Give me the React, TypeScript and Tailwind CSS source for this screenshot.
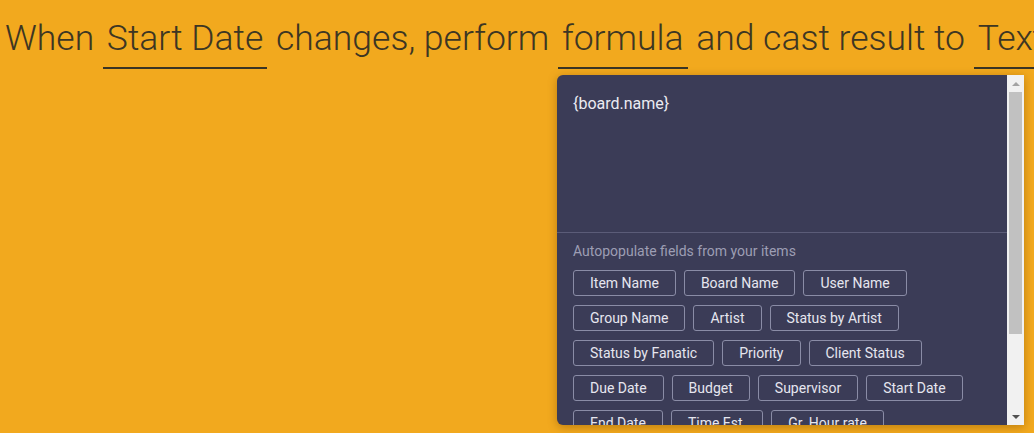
const chipRows = [
  ['Item Name', 'Board Name', 'User Name'],
  ['Group Name', 'Artist', 'Status by Artist'],
  ['Status by Fanatic', 'Priority', 'Client Status'],
  ['Due Date', 'Budget', 'Supervisor', 'Start Date'],
  ['End Date', 'Time Est.', 'Gr. Hour rate'],
]

function Pick({ label }: { label: string }) {
  return (
    <span className="inline-block border-b-2 border-[#3a3424] px-[4px] pb-[8px] leading-[42px]">
      {label}
    </span>
  )
}

export default function App() {
  return (
    <div
      className="h-[433px] w-full overflow-hidden bg-[#f2a91e] text-[#3d3623]"
      style={{ fontFamily: 'Roboto, "Liberation Sans", sans-serif' }}
    >
      {/* Sentence */}
      <div className="whitespace-nowrap pl-[5px] pt-[17px] text-[35.5px] font-light leading-[42px]">
        When <Pick label="Start Date" /> changes, perform <Pick label="formula" /> and cast result to{' '}
        <Pick label="Text" />
      </div>

      {/* Formula dropdown */}
      <div className="ml-[557px] mt-[6px] flex h-[350px] w-[467px] overflow-hidden rounded-l-[6px] bg-[#3b3c57] shadow-[0_2px_10px_rgba(120,70,0,0.45)]">
        <div className="flex min-w-0 flex-1 flex-col overflow-hidden">
          <div className="h-[158px] shrink-0 border-b border-[#5b5c78] px-4 pt-[17px] text-[16px] text-[#ebebf2]">
            {'{board.name}'}
          </div>
          <div className="px-4 pt-[9px]">
            <div className="text-[14px] leading-[18px] text-[#9d9eb4]">Autopopulate fields from your items</div>
            <div className="mt-[10px] flex flex-col gap-[9px]">
              {chipRows.map((row, i) => (
                <div key={i} className="flex gap-2">
                  {row.map((c) => (
                    <div
                      key={c}
                      className="flex h-[26px] items-center rounded-[3px] border border-[#8a8ca6] px-4 text-[14px] text-[#e6e6ef]"
                    >
                      {c}
                    </div>
                  ))}
                </div>
              ))}
            </div>
          </div>
        </div>

        {/* scrollbar */}
        <div className="flex w-[17px] shrink-0 flex-col items-center bg-[#f1f1f1]">
          <div className="flex h-[17px] items-center justify-center">
            <div className="h-0 w-0 border-x-[4px] border-b-[4px] border-x-transparent border-b-[#a3a3a3]" />
          </div>
          <div className="h-[242px] w-[13px] bg-[#c1c1c1]" />
          <div className="flex-1" />
          <div className="flex h-[17px] items-center justify-center">
            <div className="h-0 w-0 border-x-[4px] border-t-[4px] border-x-transparent border-t-[#505050]" />
          </div>
        </div>
      </div>
    </div>
  )
}
